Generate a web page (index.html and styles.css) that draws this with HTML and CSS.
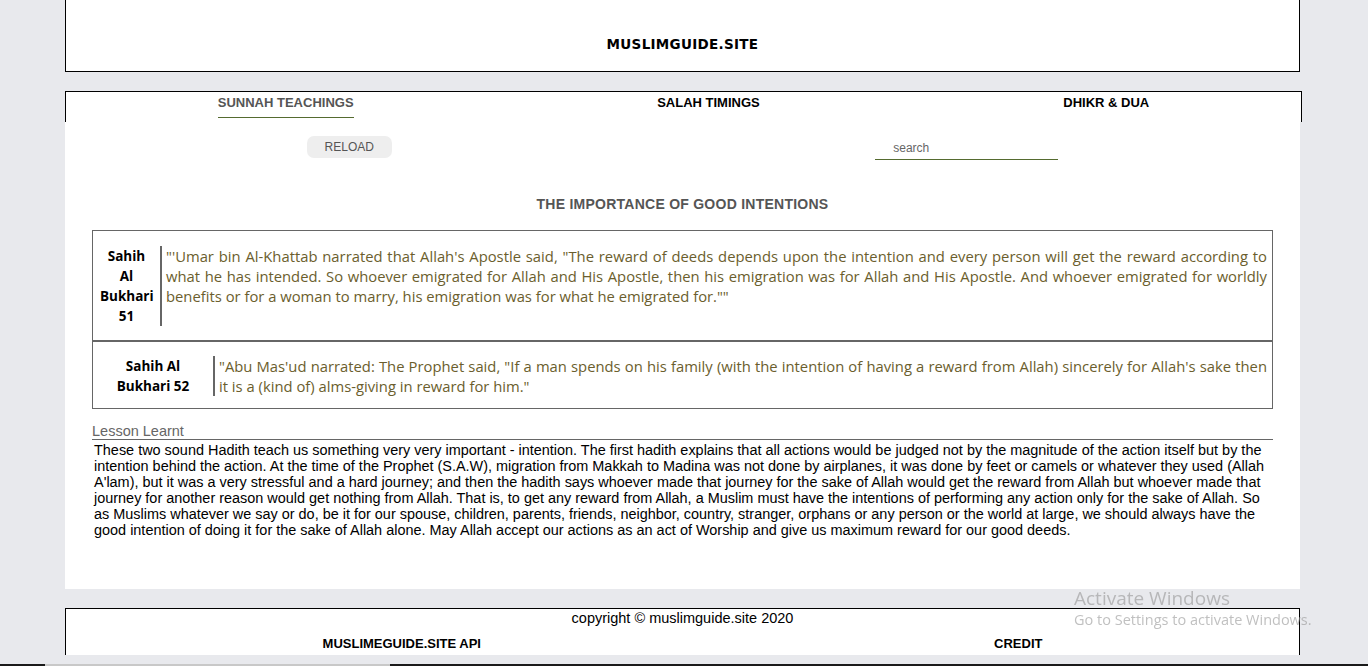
FILE: index.html
```html
<!DOCTYPE html>
<html lang="en">
<head>
<meta charset="utf-8">
<title>MuslimGuide.site</title>
<link rel="stylesheet" href="styles.css">
</head>
<body>
<div class="page">
  <header class="site-header">
    <h1 class="site-title">MUSLIMGUIDE.SITE</h1>
  </header>

  <nav class="site-nav">
    <a class="nav-link nav-link--active" href="#">SUNNAH TEACHINGS</a>
    <a class="nav-link" href="#">SALAH TIMINGS</a>
    <a class="nav-link" href="#">DHIKR &amp; DUA</a>
  </nav>

  <main class="content">
    <div class="toolbar">
      <button class="reload-btn" type="button">RELOAD</button>
      <input class="search-input" type="text" placeholder="search">
    </div>

    <h2 class="topic-title">THE IMPORTANCE OF GOOD INTENTIONS</h2>

    <div class="hadith-list">
      <div class="hadith">
        <div class="hadith-source hadith-source--narrow">Sahih Al Bukhari 51</div>
        <p class="hadith-text">"'Umar bin Al-Khattab narrated that Allah's Apostle said, "The reward of deeds depends upon the intention and every person will get the reward according to what he has intended. So whoever emigrated for Allah and His Apostle, then his emigration was for Allah and His Apostle. And whoever emigrated for worldly benefits or for a woman to marry, his emigration was for what he emigrated for.""</p>
      </div>
      <div class="hadith">
        <div class="hadith-source hadith-source--wide">Sahih Al Bukhari 52</div>
        <p class="hadith-text">"Abu Mas'ud narrated: The Prophet said, "If a man spends on his family (with the intention of having a reward from Allah) sincerely for Allah's sake then it is a (kind of) alms-giving in reward for him."</p>
      </div>
    </div>

    <section class="lesson">
      <h3 class="lesson-title">Lesson Learnt</h3>
      <p class="lesson-text">These two sound Hadith teach us something very very important - intention. The first hadith explains that all actions would be judged not by the magnitude of the action itself but by the intention behind the action. At the time of the Prophet (S.A.W), migration from Makkah to Madina was not done by airplanes, it was done by feet or camels or whatever they used (Allah A'lam), but it was a very stressful and a hard journey; and then the hadith says whoever made that journey for the sake of Allah would get the reward from Allah but whoever made that journey for another reason would get nothing from Allah. That is, to get any reward from Allah, a Muslim must have the intentions of performing any action only for the sake of Allah. So as Muslims whatever we say or do, be it for our spouse, children, parents, friends, neighbor, country, stranger, orphans or any person or the world at large, we should always have the good intention of doing it for the sake of Allah alone. May Allah accept our actions as an act of Worship and give us maximum reward for our good deeds.</p>
    </section>
  </main>

  <footer class="site-footer">
    <p class="copyright">copyright © muslimguide.site 2020</p>
    <div class="footer-links">
      <a class="footer-link" href="#">MUSLIMEGUIDE.SITE API</a>
      <a class="footer-link" href="#">CREDIT</a>
    </div>
  </footer>
</div>

<div class="activate-note">
  <div class="activate-title">Activate Windows</div>
  <div class="activate-sub">Go to Settings to activate Windows.</div>
</div>
<div class="bottom-strip"><div class="bottom-thumb"></div></div>
</body>
</html>
```

FILE: styles.css
```css
* { box-sizing: border-box; }

html, body {
  margin: 0;
  padding: 0;
  height: 666px;
  overflow: hidden;
}

body {
  background: #e8e9ed;
  font-family: "Liberation Sans", Arial, sans-serif;
  color: #000;
}

.page {
  width: 1235px;
  margin-left: 65px;
}

/* header */
.site-header {
  height: 72px;
  background: #fff;
  border: 1px solid #000;
  border-top: none;
  display: flex;
  justify-content: center;
  padding-top: 36px;
}

.site-title {
  margin: 0;
  font-family: "Comic Sans MS", "DejaVu Sans", sans-serif;
  font-weight: bold;
  font-size: 13.5px;
  line-height: 16px;
  letter-spacing: 0.3px;
}

/* nav */
.site-nav {
  margin-top: 19px;
  margin-right: -2px;
  height: 31px;
  background: #fff;
  border: 1px solid #000;
  border-bottom: none;
  display: flex;
  justify-content: space-around;
  align-items: flex-start;
}

.nav-link {
  display: block;
  padding: 3px 0 7px;
  font-size: 13px;
  font-weight: bold;
  line-height: 15px;
  color: #000;
  text-decoration: none;
}

.nav-link--active {
  color: #555;
  border-bottom: 1px solid #556b2f;
}

/* main */
.content {
  background: #fff;
  padding: 14px 0 51px;
}

.toolbar {
  display: flex;
  justify-content: space-around;
  align-items: flex-start;
}

.reload-btn {
  width: 85px;
  height: 22px;
  border: none;
  border-radius: 7px;
  background: #eee;
  color: #555;
  font-family: "Liberation Sans", Arial, sans-serif;
  font-size: 12px;
  padding: 0;
}

.search-input {
  width: 183px;
  height: 24px;
  border: none;
  border-bottom: 1px solid #556b2f;
  padding: 0 0 0 18px;
  font-family: "Liberation Sans", Arial, sans-serif;
  font-size: 12px;
  outline: none;
  background: transparent;
}

.search-input::placeholder { color: #666; }

.topic-title {
  margin: 36px 0 18px;
  text-align: center;
  font-size: 14px;
  letter-spacing: 0.25px;
  line-height: 16px;
  font-weight: bold;
  color: #555;
}

/* hadith cards */
.hadith-list {
  margin: 0 27px;
}

.hadith {
  display: flex;
  align-items: flex-start;
  border: 1px solid #666;
  padding: 15px 5px 14px 0;
}

.hadith + .hadith {
  padding-top: 14px;
  padding-bottom: 12px;
}

.hadith-source {
  flex: none;
  text-align: center;
  font-family: "Comic Sans MS", "Open Sans", sans-serif;
  font-weight: bold;
  font-size: 13.5px;
  line-height: 20px;
  border-right: 2px solid #666;
}

.hadith-source--narrow { width: 69px; padding: 0 7px; }
.hadith-source--wide { width: 122px; padding: 0 10px; }

.hadith-text {
  margin: 0;
  padding-left: 4px;
  flex: 1;
  text-align: justify;
  font-family: "Comic Sans MS", "Open Sans", sans-serif;
  font-size: 14.8px;
  line-height: 20px;
  color: #6b5e2d;
}

/* lesson */
.lesson {
  margin: 14px 27px 0;
}

.lesson-title {
  margin: 0;
  font-size: 14.5px;
  line-height: 16px;
  font-weight: normal;
  color: #666;
  border-bottom: 1px solid #666;
}

.lesson-text {
  margin: 2px 0 0;
  padding: 0 2px 0 2px;
  font-size: 14.45px;
  line-height: 16px;
}

/* footer */
.site-footer {
  margin-top: 19px;
  height: 47px;
  background: #fff;
  border: 1px solid #000;
  border-bottom: none;
}

.copyright {
  margin: 0;
  padding-top: 1px;
  text-align: center;
  font-size: 14.5px;
  line-height: 17px;
}

.footer-links {
  display: flex;
  justify-content: space-around;
  padding-top: 9px;
}

.footer-link {
  font-size: 13px;
  font-weight: bold;
  line-height: 16px;
  color: #000;
  text-decoration: none;
}

/* overlays */
.activate-note {
  position: fixed;
  left: 1074px;
  top: 586px;
  color: rgba(150, 150, 150, 0.6);
  font-family: "Open Sans", "Noto Sans", sans-serif;
  pointer-events: none;
}

.activate-title {
  font-size: 19px;
  line-height: 24px;
}

.activate-sub {
  font-size: 14.5px;
  line-height: 20px;
}

.bottom-strip {
  position: fixed;
  left: 0;
  right: 0;
  bottom: 0;
  height: 2px;
  background: #1a1a1a;
}

.bottom-thumb {
  margin-left: 45px;
  width: 345px;
  height: 2px;
  background: #c8c8c8;
}
```
